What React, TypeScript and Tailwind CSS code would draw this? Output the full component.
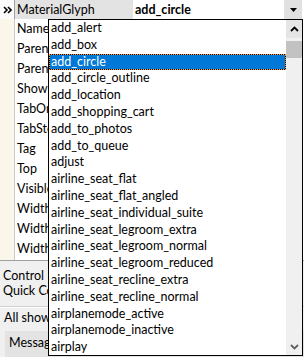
import React from "react";

const glyphs = [
  "add_alert",
  "add_box",
  "add_circle",
  "add_circle_outline",
  "add_location",
  "add_shopping_cart",
  "add_to_photos",
  "add_to_queue",
  "adjust",
  "airline_seat_flat",
  "airline_seat_flat_angled",
  "airline_seat_individual_suite",
  "airline_seat_legroom_extra",
  "airline_seat_legroom_normal",
  "airline_seat_legroom_reduced",
  "airline_seat_recline_extra",
  "airline_seat_recline_normal",
  "airplanemode_active",
  "airplanemode_inactive",
  "airplay",
];

const props = [
  "Name",
  "Parent",
  "ParentShowHint",
  "ShowHint",
  "TabOrder",
  "TabStop",
  "Tag",
  "Top",
  "Visible",
  "Width",
  "WidthMode",
  "WidthPercent",
];

function Chevron({ dir, color }: { dir: "up" | "down"; color: string }) {
  return (
    <svg width="9" height="6" viewBox="0 0 9 6">
      <polyline
        points={dir === "up" ? "1,5 4.5,1.5 8,5" : "1,1 4.5,4.5 8,1"}
        fill="none"
        stroke={color}
        strokeWidth="1.8"
      />
    </svg>
  );
}

export default function App() {
  const selected = "add_circle";

  return (
    <div className="relative w-[304px] h-[357px] overflow-hidden bg-[#f0f0f0] text-[12.5px] text-black font-['Lato',sans-serif]">
      {/* Property grid */}
      <div className="flex flex-col h-[261px] bg-white border-b border-[#a0a0a0]">
        <div className="flex h-[19px] shrink-0">
          <div className="w-[15px] border-r border-[#a0a0a0] bg-[#fbfbfb] flex items-center justify-center">
            <svg width="9" height="8" viewBox="0 0 9 8">
              <polyline points="1,1 4,4 1,7" fill="none" stroke="#000" strokeWidth="1.6" />
              <polyline points="5,1 8,4 5,7" fill="none" stroke="#000" strokeWidth="1.6" />
            </svg>
          </div>
          <div className="w-[118px] bg-[#e3e3e3] pl-[2px] leading-[19px] whitespace-nowrap overflow-hidden">
            MaterialGlyph
          </div>
          <div className="flex-1 bg-white pl-[2px] leading-[19px] font-bold whitespace-nowrap">
            {selected}
          </div>
          <div className="w-[18px] bg-[#e1e1e1] flex items-center justify-center">
            <svg width="7" height="4" viewBox="0 0 7 4">
              <polygon points="0,0 7,0 3.5,4" fill="#000" />
            </svg>
          </div>
          <div className="w-[2px] bg-white" />
        </div>
        {props.map((p) => (
          <div key={p} className="flex h-[20px] shrink-0">
            <div className="w-[15px] border-r border-[#c8c8c8] bg-[#fbf6ea]" />
            <div className="w-[118px] pl-[2px] leading-[20px] whitespace-nowrap overflow-hidden">{p}</div>
            <div className="flex-1" />
          </div>
        ))}
        <div className="flex flex-1">
          <div className="w-[15px] border-r border-[#c8c8c8] bg-[#fbf6ea]" />
        </div>
      </div>

      {/* Lower panels */}
      <div className="flex flex-col pt-[7px]">
        <div className="pl-[3px] leading-[15px] whitespace-nowrap">Control Bar</div>
        <div className="pl-[3px] leading-[15px] whitespace-nowrap">Quick Commands</div>
        <div className="mt-[8px] h-[2px] border-t border-[#d0d0d0] border-b border-b-white" />
        <div className="pl-[4px] leading-[15px] mt-[2px] whitespace-nowrap">All shown</div>
        <div className="mt-[6px] ml-[5px] h-[30px] bg-[#e3e3e3] pl-[4px] pt-[4px] leading-[15px] whitespace-nowrap">
          Messages
        </div>
      </div>

      {/* Open drop-down list */}
      <div className="absolute left-[48px] top-[19px] w-[255px] h-[337px] border border-black bg-white flex">
        <div className="flex-1 flex flex-col overflow-hidden">
          {glyphs.map((g) =>
            g === selected ? (
              <div key={g} className="h-[16.8px] shrink-0 bg-black">
                <div className="h-full border border-dotted border-[#ff9a1f] bg-[#0078d7] bg-clip-padding text-white pl-[1px] leading-[14.8px] whitespace-nowrap">
                  {g}
                </div>
              </div>
            ) : (
              <div key={g} className="h-[16.8px] shrink-0 pl-[2px] leading-[16.8px] whitespace-nowrap">
                {g}
              </div>
            )
          )}
        </div>
        <div className="w-[16px] bg-[#f0f0f0] flex flex-col">
          <div className="h-[18px] bg-[#e5e5e5] flex items-center justify-center">
            <Chevron dir="up" color="#000" />
          </div>
          <div className="mt-[3px] h-[17px] bg-[#c2c2c2]" />
          <div className="flex-1" />
          <div className="h-[16px] flex items-center justify-center">
            <Chevron dir="down" color="#606060" />
          </div>
        </div>
      </div>
    </div>
  );
}
